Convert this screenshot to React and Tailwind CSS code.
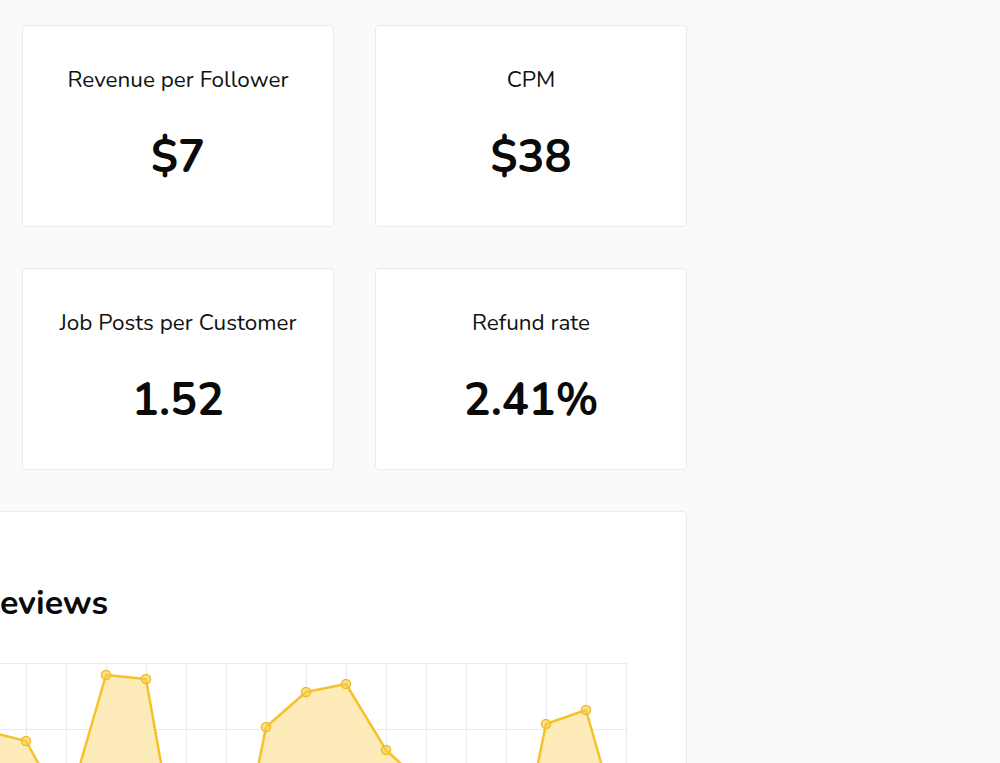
import React from "react";

const font = { fontFamily: "Nunito, Lato, 'Noto Sans', sans-serif" };

function StatCard({ title, value }) {
  return (
    <div className="w-[312px] h-[202px] shrink-0 bg-white border border-[#ebebeb] rounded-[4px] flex flex-col items-center pt-[40px]">
      <div className="text-[22.5px] leading-[28px] text-[#111]">{title}</div>
      <div className="mt-[40px] text-[45px] leading-[48px] font-bold text-[#0a0a0a]">{value}</div>
    </div>
  );
}

const pts = [
  [0, 60], [40, 68], [80, 78], [120, 150], [160, 12], [200, 16], [240, 240], [280, 264],
  [320, 64], [360, 29], [400, 21], [440, 87], [480, 124], [520, 200], [560, 257],
  [600, 61], [640, 47], [680, 187],
];
const visible = [[40, 68], [80, 78], [160, 12], [200, 16], [320, 64], [360, 29], [400, 21], [440, 87], [600, 61], [640, 47]];

function Chart() {
  const line = pts.map((p) => p.join(",")).join(" ");
  const area = `0,300 ${line} 680,300`;
  const vLines = Array.from({ length: 18 }, (_, i) => i * 40);
  const hLines = [0, 66, 132, 198, 264];
  return (
    <svg width="681" height="300" viewBox="0 0 681 300" className="block ml-[15px]">
      {vLines.map((x) => (
        <line key={"v" + x} x1={x + 0.5} y1="0" x2={x + 0.5} y2="300" stroke="#e9ebf1" strokeWidth="1" />
      ))}
      {hLines.map((y) => (
        <line key={"h" + y} x1="0" y1={y + 0.5} x2="681" y2={y + 0.5} stroke="#e9ebf1" strokeWidth="1" />
      ))}
      <polygon points={area} fill="#fde7ad" fillOpacity="0.85" />
      <polyline points={line} fill="none" stroke="#f5c22a" strokeWidth="2.5" strokeLinejoin="round" />
      {visible.map(([x, y]) => (
        <circle key={x} cx={x} cy={y} r="4.5" fill="#f8cf4f" fillOpacity="0.6" stroke="#f1bd25" strokeWidth="1.5" />
      ))}
    </svg>
  );
}

export default function App() {
  return (
    <div className="w-[1000px] h-[763px] overflow-hidden bg-[#fafafa]" style={font}>
      <div className="pt-[25px] ml-[-331px] flex flex-col">
        <div className="flex gap-[41px]">
          <div className="w-[312px] shrink-0" />
          <StatCard title="Revenue per Follower" value="$7" />
          <StatCard title="CPM" value="$38" />
        </div>
        <div className="flex gap-[41px] mt-[41px]">
          <div className="w-[312px] shrink-0" />
          <StatCard title="Job Posts per Customer" value="1.52" />
          <StatCard title="Refund rate" value="2.41%" />
        </div>
        <div className="mt-[41px] ml-[261px] w-[757px] h-[400px] bg-white border border-[#ebebeb] rounded-[4px] pt-[71px]">
          <div className="pl-[46px] text-[34px] leading-[40px] font-bold text-[#0a0a0a]">Reviews</div>
          <div className="mt-[40px]">
            <Chart />
          </div>
        </div>
      </div>
    </div>
  );
}
